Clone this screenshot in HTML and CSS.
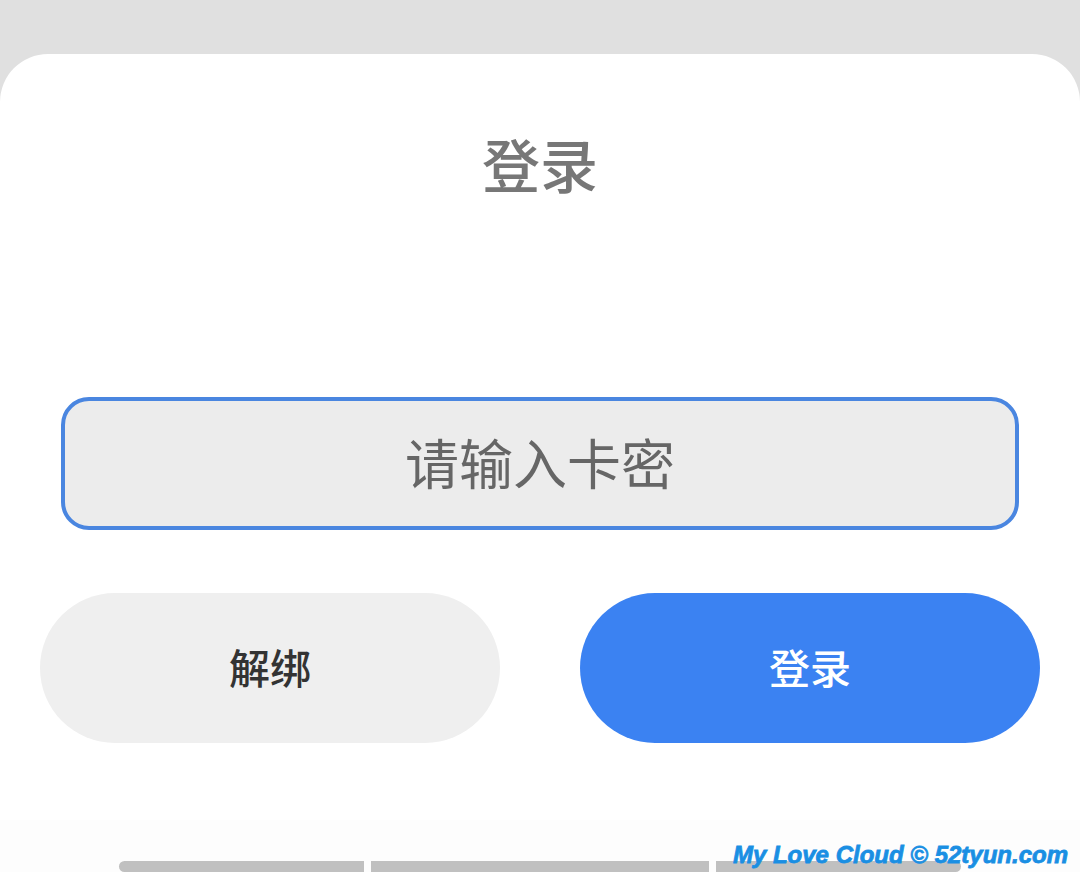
FILE: index.html
```html
<!DOCTYPE html>
<html lang="zh-CN">
<head>
<meta charset="utf-8">
<title>登录</title>
<link rel="stylesheet" href="styles.css">
</head>
<body>
<div class="page">
  <main class="card">
    <h1 class="title">登录</h1>
    <div class="input-box">
      <input class="input" type="text" placeholder="请输入卡密">
    </div>
    <div class="actions">
      <button class="btn btn-unbind" type="button">解绑</button>
      <button class="btn btn-login" type="button">登录</button>
    </div>
  </main>
  <footer class="footer">
    <div class="bars">
      <span class="bar bar-first"></span>
      <span class="bar bar-mid"></span>
      <span class="bar bar-last"></span>
    </div>
    <div class="watermark">My Love Cloud © 52tyun.com</div>
  </footer>
</div>
</body>
</html>
```
FILE: styles.css
```css
* { box-sizing: border-box; }
html, body {
  margin: 0;
  padding: 0;
}
body {
  background: #e0e0e0;
  font-family: "Noto Sans CJK SC", "Noto Sans", sans-serif;
  width: 1080px;
  height: 872px;
  overflow: hidden;
}
.page {
  padding-top: 54px;
  display: flex;
  flex-direction: column;
}
.card {
  background: #ffffff;
  border-radius: 48px 48px 0 0;
  height: 766px;
  display: flex;
  flex-direction: column;
  padding-top: 78px;
}
.title {
  margin: 0;
  text-align: center;
  font-size: 58px;
  line-height: 62px;
  font-weight: 500;
  color: #777777;
}
.input-box {
  margin: 203px 61px 0 61px;
  height: 133px;
  border: 4px solid #4a86e0;
  border-radius: 28px;
  background: #ececec;
  display: flex;
  align-items: center;
}
.input {
  width: 100%;
  height: 100%;
  border: none;
  outline: none;
  background: transparent;
  text-align: center;
  font-family: "Noto Sans CJK SC", sans-serif;
  font-size: 54px;
  color: #666666;
  padding: 0 0 4px 0;
}
.input::placeholder {
  color: #666666;
  opacity: 1;
}
.actions {
  margin: 63px 40px 0 40px;
  display: flex;
  justify-content: space-between;
}
.btn {
  width: 460px;
  height: 150px;
  border: none;
  border-radius: 75px;
  font-family: "Noto Sans CJK SC", sans-serif;
  font-size: 41px;
  font-weight: 500;
  padding: 0 0 4px 0;
}
.btn-unbind {
  background: #efefef;
  color: #333333;
}
.btn-login {
  background: #3b82f2;
  color: #ffffff;
}
.footer {
  position: relative;
  height: 52px;
  background: #fdfdfd;
  display: flex;
  align-items: flex-end;
}
.bars {
  display: flex;
  gap: 7px;
  padding-left: 119px;
}
.bar {
  display: block;
  height: 11px;
  background: #c0c0c0;
}
.bar-first {
  width: 245px;
  border-radius: 6px 0 0 6px;
}
.bar-mid {
  width: 338px;
}
.bar-last {
  width: 245px;
  border-radius: 0 6px 6px 0;
}
.watermark {
  position: absolute;
  right: 12px;
  bottom: 4px;
  font-family: "Liberation Sans", Arial, sans-serif;
  font-weight: 700;
  font-style: italic;
  font-size: 24px;
  line-height: 26px;
  color: #1a8fe3;
  white-space: nowrap;
  -webkit-text-stroke: 0.8px #1a8fe3;
}
```
